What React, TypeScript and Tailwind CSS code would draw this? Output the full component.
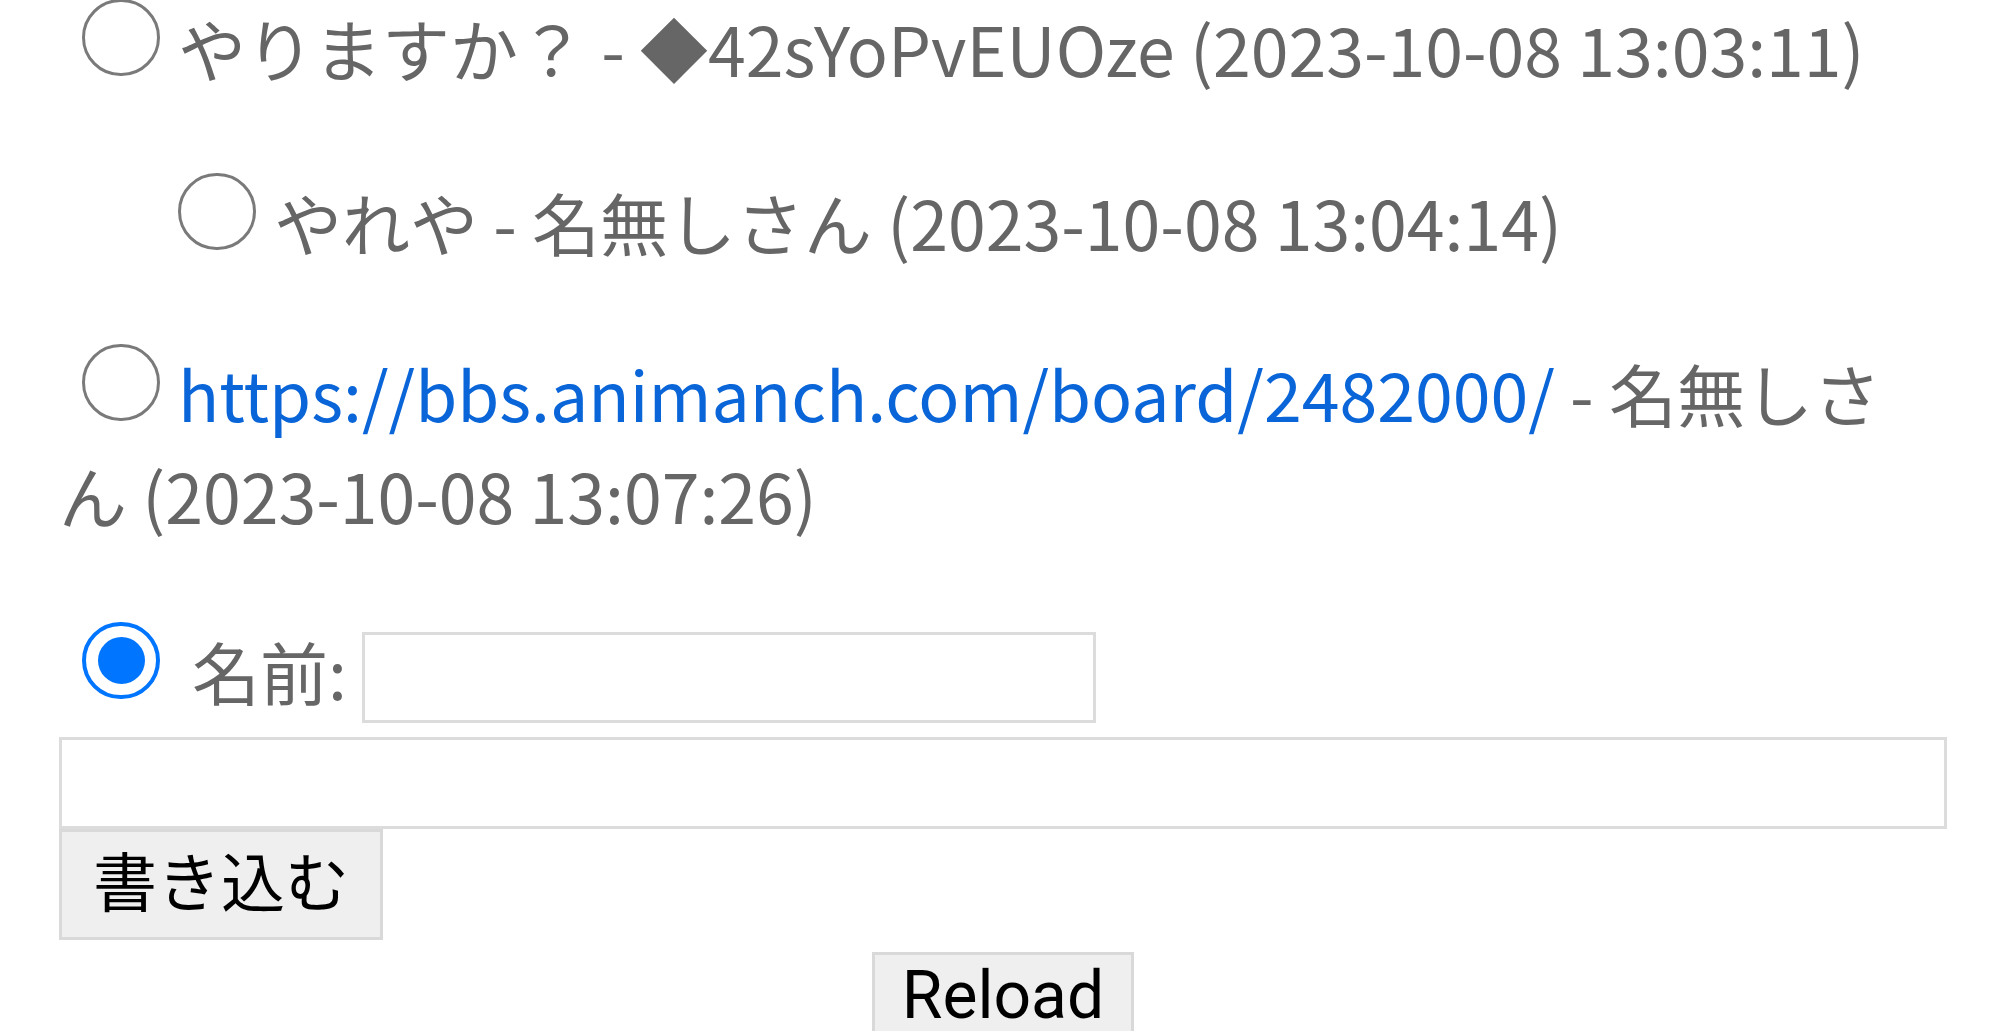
import React from 'react';

type Post = { id: string; text: string; link?: string; name: string; date: string; depth: number };

const posts: Post[] = [
  { id: 'p1', text: 'やりますか？', name: '◆42sYoPvEUOze', date: '2023-10-08 13:03:11', depth: 0 },
  { id: 'p2', text: 'やれや', name: '名無しさん', date: '2023-10-08 13:04:14', depth: 1 },
  { id: 'p3', text: '', link: 'https://bbs.animanch.com/board/2482000/', name: '名無しさん', date: '2023-10-08 13:07:26', depth: 0 },
];

function Radio() {
  return (
    <span className="inline-block align-baseline w-[78px] h-[77px] ml-[23px] mr-[18px] mb-[1px] rounded-full border-[3px] border-[#7a7a7a]" />
  );
}

export default function App() {
  return (
    <div className="min-h-screen overflow-hidden bg-white pl-[59px] pr-[53px] text-[68px] leading-[102px] text-[#666] font-['Noto_Sans_CJK_JP',sans-serif]">
      <div className="-mt-[3px]">
        {posts.map((post, i) => (
          <div
            key={post.id}
            className={`${post.depth === 1 ? 'pl-[96px]' : ''} ${i === 0 ? 'mb-[72px]' : i === 1 ? 'mb-[69px]' : 'mb-[74px]'} pr-[27px]`}
          >
            <Radio />
            {post.link ? (
              <a href={post.link} className="text-[#0a66d8]">
                {post.link}
              </a>
            ) : (
              post.text
            )}
            {' - '}
            {post.name} ({post.date})
          </div>
        ))}
      </div>

      {/* reply form */}
      <div className="flex items-start h-[103px]">
        <span className="mt-[2px] ml-[23px] mr-[32px] w-[78px] h-[77px] shrink-0 rounded-full border-[4px] border-[#0075ff] flex items-center justify-center">
          <span className="w-[47px] h-[47px] rounded-full bg-[#0075ff]" />
        </span>
        <span className="leading-[102px]">名前:</span>
        <input className="ml-[15px] mt-[12px] w-[734px] h-[91px] border-[3px] border-[#dcdcdc] bg-white outline-none" />
      </div>
      <textarea className="block w-full h-[92px] mt-[14px] border-[3px] border-[#dcdcdc] resize-none outline-none" />
      <button className="flex items-center justify-center w-[324px] h-[111px] bg-[#efefef] border-[3px] border-[#d9d9d9] text-black text-[64px] leading-none font-[Roboto,'Noto_Sans_CJK_JP',sans-serif]">
        書き込む
      </button>
      <div className="flex justify-center mt-[12px]">
        <button className="flex items-center justify-center w-[262px] h-[88px] bg-[#efefef] border-[3px] border-[#d9d9d9] text-black text-[66px] leading-none font-[Roboto,'Noto_Sans_CJK_JP',sans-serif]">
          Reload
        </button>
      </div>
    </div>
  );
}
